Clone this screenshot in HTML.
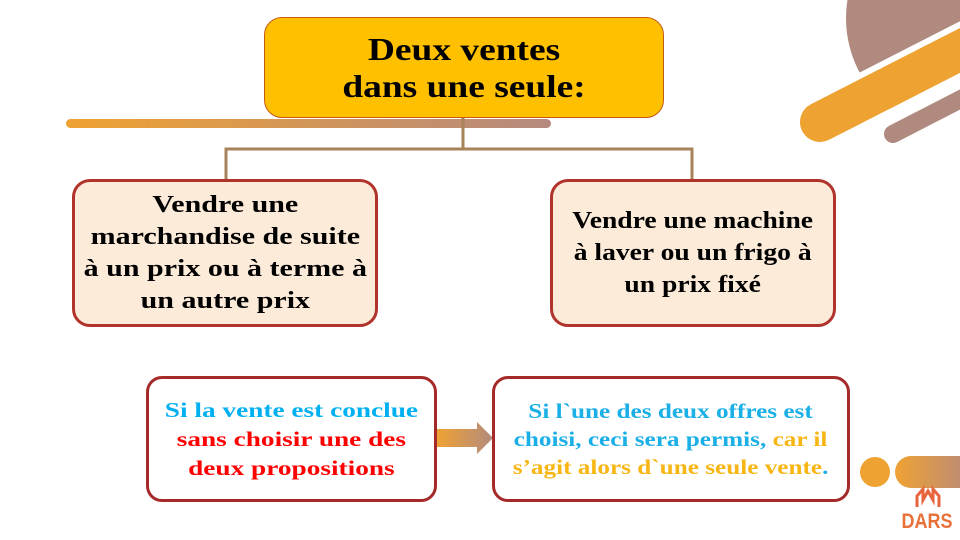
<!DOCTYPE html>
<html><head><meta charset="utf-8"><style>
*{margin:0;padding:0;box-sizing:border-box}
body{width:960px;height:540px;background:#fff;position:relative;overflow:hidden;font-family:"Liberation Serif",serif;font-weight:bold}
.box{position:absolute;display:flex;align-items:center;justify-content:center;text-align:center;white-space:nowrap}
.s{display:inline-block}
</style></head><body>
<svg width="960" height="540" style="position:absolute;left:0;top:0">
<defs>
<linearGradient id="g1" x1="0" x2="1"><stop offset="0" stop-color="#EFA232"/><stop offset="1" stop-color="#B5897F"/></linearGradient>
<linearGradient id="g2" x1="0" x2="1"><stop offset="0" stop-color="#EFA232"/><stop offset="1" stop-color="#B38A7E"/></linearGradient>
</defs>
<circle cx="962" cy="18" r="116" fill="#B08A7E"/>
<polygon points="780,150 1000,38 1000,300 780,300" fill="#fff"/>
<line x1="820" y1="122" x2="1000" y2="30" stroke="#fff" stroke-width="52" stroke-linecap="round"/>
<line x1="820" y1="122" x2="1000" y2="30" stroke="#EEA232" stroke-width="40" stroke-linecap="round"/>
<line x1="893" y1="134" x2="990" y2="84" stroke="#B08A7E" stroke-width="18" stroke-linecap="round"/>
<rect x="66" y="119" width="485" height="9" rx="4.5" fill="url(#g1)"/>
<path d="M463 118V149M226 181V149H692V181" stroke="#A88258" stroke-width="3" fill="none"/>
<path d="M437 429H477V422L493 438L477 454V447H437Z" fill="url(#g2)"/>
<circle cx="875" cy="472" r="15" fill="#EEA232"/>
<rect x="895" y="456" width="80" height="32" rx="16" fill="url(#g1)"/>
<path d="M917 507V496L923 489V500L928 491L933 500V489L939 496V507" stroke="#E8643C" stroke-width="3" fill="none"/>
<text x="927" y="528" font-family="Liberation Sans" font-weight="bold" font-size="18" fill="#E8703A" text-anchor="middle" transform="translate(927 528) scale(1 1.2) translate(-927 -528)">DARS</text>
</svg>
<div class="box" style="left:264px;top:17px;width:400px;height:101px;background:#FFC000;border:1.5px solid #C55A11;border-radius:18px;font-size:32px;line-height:37px;color:#000"><span class="s" style="transform:scaleX(1.17)">Deux ventes<br>dans une seule:</span></div>
<div class="box" style="left:72px;top:179px;width:306px;height:148px;background:#FCEBD9;border:3px solid #B0342C;border-radius:18px;font-size:24px;line-height:32px;color:#000"><span class="s" style="transform:scaleX(1.25)">Vendre une<br>marchandise de suite<br>à un prix ou à terme à<br>un autre prix</span></div>
<div class="box" style="left:550px;top:179px;width:286px;height:148px;background:#FCEBD9;border:3px solid #B0342C;border-radius:18px;font-size:24px;line-height:32px;color:#000"><span class="s" style="transform:scaleX(1.15)">Vendre une machine<br>à laver ou un frigo à<br>un prix fixé</span></div>
<div class="box" style="left:146px;top:376px;width:291px;height:126px;background:#fff;border:3px solid #A52A2A;border-radius:16px;font-size:21px;line-height:29px"><span class="s" style="transform:scaleX(1.3)"><span style="color:#00B0F0">Si la vente est conclue</span><br><span style="color:#FF0000">sans choisir une des<br>deux propositions</span></span></div>
<div class="box" style="left:492px;top:376px;width:358px;height:126px;background:#fff;border:3px solid #A52A2A;border-radius:16px;font-size:21px;line-height:28px"><span class="s" style="transform:scaleX(1.2)"><span style="color:#1AAFE6">Si l`une des deux offres est<br>choisi, ceci sera permis, </span><span style="color:#F7B614">car il<br>s’agit alors d`une seule vente</span><span style="color:#1AAFE6">.</span></span></div>
</body></html>
